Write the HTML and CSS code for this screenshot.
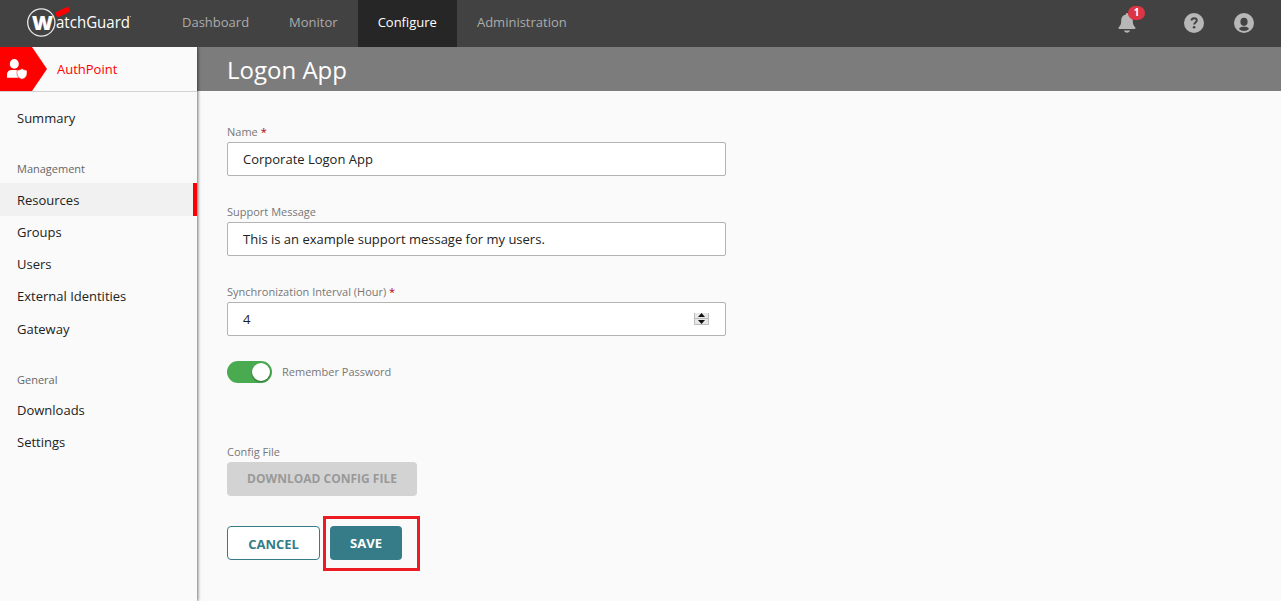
FILE: index.html
```html
<!DOCTYPE html>
<html lang="en">
<head>
<meta charset="utf-8">
<title>Logon App</title>
<link rel="stylesheet" href="styles.css">
</head>
<body>
<header class="topbar">
  <div class="brand">
    <svg class="logo" width="110" height="34" viewBox="0 0 110 34">
      <circle cx="16.300" cy="17.500" r="13.600" fill="none" stroke="#e8e8e8" stroke-width="1.300"/>
      <path d="M33.500 9 42 5" stroke="#f00" stroke-width="5.600" stroke-linecap="round"/>
      <text class="logo-w" x="7" y="25" textLength="21" lengthAdjust="spacingAndGlyphs">W</text>
      <text class="logo-word" x="31" y="23" textLength="74" lengthAdjust="spacingAndGlyphs">atchGuard</text>
      <circle cx="105.500" cy="11.500" r=".6" fill="#bbb"/>
    </svg>
  </div>
  <nav class="tabs">
    <a class="tab">Dashboard</a>
    <a class="tab">Monitor</a>
    <a class="tab active">Configure</a>
    <a class="tab">Administration</a>
  </nav>
  <div class="tools">
    <div class="bell">
      <svg width="18" height="20" viewBox="0 0 18 20" fill="#b7b7b7">
        <path d="M9 0C8.200 0 7.900.6 7.900 1.400 4.800 2 3.200 4.200 3.200 7.500c0 4-1 5.300-2.400 6.700-.6.7-.2 1.800.7 1.800h15c.9 0 1.300-1.100.7-1.800-1.400-1.400-2.400-2.700-2.400-6.700 0-3.300-1.600-5.500-4.700-6.100C10.100.6 9.800 0 9 0zM6 17.500h6c-.3 1.400-1.500 2.200-3 2.200s-2.700-.8-3-2.200z"/>
      </svg>
      <span class="badge">1</span>
    </div>
    <svg class="help" width="20" height="20" viewBox="0 0 20 20">
      <circle cx="10" cy="10" r="10" fill="#b7b7b7"/>
      <path d="M7.300 7.500C7.700 6 8.700 5.200 10.100 5.200c1.600 0 2.700.9 2.700 2.200 0 2-2.700 2-2.700 4.100" fill="none" stroke="#424242" stroke-width="1.900"/>
      <circle cx="10.100" cy="14.300" r="1.300" fill="#424242"/>
    </svg>
    <svg class="user" width="20" height="20" viewBox="0 0 20 20">
      <circle cx="10" cy="10" r="10" fill="#b7b7b7"/>
      <ellipse cx="10" cy="8.800" rx="3.600" ry="4.100" fill="#424242"/>
      <path d="M5 15.900c.4-1.500 2.500-2.100 5-2.100s4.600.6 5 2.100c-1.200 1.300-3 2-5 2s-3.800-.7-5-2z" fill="#424242"/>
    </svg>
  </div>
</header>
<div class="shell">
  <aside class="sidebar">
    <div class="product">
      <svg width="47" height="44" viewBox="0 0 47 44">
        <path d="M0 0H32L47 22 32 44H0z" fill="#f00"/>
        <ellipse cx="14.300" cy="16.900" rx="4.500" ry="4.900" fill="#fff"/>
        <path d="M7 30.700v-3.200c0-3 2-4.500 4.500-4.500h5c.8 0 1 .2 1 .7v3.300c0 1.500.4 2.700 1.200 3.700z" fill="#fff"/>
        <path d="M22 21.600c1.700 1.200 3 1.600 5 1.700v3.400c0 2.700-1.900 4.600-5 5.600-3.100-1-5-2.900-5-5.600v-3.400c2-.1 3.300-.5 5-1.700z" fill="#fff" stroke="#f00" stroke-width=".5"/>
      </svg>
      <span>AuthPoint</span>
    </div>
    <nav class="menu">
      <a class="item">Summary</a>
      <h2 class="group">Management</h2>
      <a class="item current">Resources</a>
      <a class="item">Groups</a>
      <a class="item">Users</a>
      <a class="item">External Identities</a>
      <a class="item">Gateway</a>
      <h2 class="group">General</h2>
      <a class="item">Downloads</a>
      <a class="item">Settings</a>
    </nav>
  </aside>
  <main class="main">
    <h1 class="title">Logon App</h1>
    <form class="form">
      <div class="field">
        <div class="label">Name <span class="req">*</span></div>
        <div class="input">Corporate Logon App</div>
      </div>
      <div class="field">
        <div class="label">Support Message</div>
        <div class="input">This is an example support message for my users.</div>
      </div>
      <div class="field">
        <div class="label">Synchronization Interval (Hour) <span class="req">*</span></div>
        <div class="input">4
          <svg class="spinner" width="15" height="12" viewBox="0 0 15 12">
            <path d="M0 0H15V12H0z" fill="#e8e8e8"/>
            <path d="M.5 0V11.500H14.500V0M0 5.500H15" fill="none" stroke="#bcbcbc"/>
            <path d="M4 4 7.500 0 11 4zM4 7h7l-3.500 4z" fill="#111"/>
          </svg>
        </div>
      </div>
      <div class="remember"><span class="switch"><span class="knob"></span></span>Remember Password</div>
      <div class="label">Config File</div>
      <div class="btn download">DOWNLOAD CONFIG FILE</div>
      <div class="actions">
        <div class="btn cancel">CANCEL</div>
        <div class="highlight"><div class="btn save">SAVE</div></div>
      </div>
    </form>
  </main>
</div>
</body>
</html>
```
FILE: styles.css
```css
* { box-sizing: border-box; }
body { margin: 0; height: 601px; overflow: hidden; background: #fafafa; color: #222; font: 13px/20px "Open Sans", sans-serif; }
svg { display: block; flex: none; }
.topbar { display: flex; height: 47px; background: #424242; }
.brand { width: 162px; padding: 5px 0 0 25px; }
.logo { overflow: visible; }
.logo-w { fill: #fff; stroke: #fff; stroke-width: .2px; font: 800 20px "Open Sans", sans-serif; }
.logo-word { fill: #fff; font: 16.500px "Open Sans", sans-serif; }
.tabs { display: flex; }
.tab { padding: 12px 20px 0; color: #acacac; white-space: nowrap; }
.tab.active { background: #262626; color: #fff; }
.tools { display: flex; margin-left: auto; padding: 13px 27px 0 0; }
.bell { position: relative; width: 18px; margin-right: 48px; }
.badge { position: absolute; left: 10px; top: -7px; width: 17px; height: 14px; border-radius: 7px; background: #dc3545; color: #fff; font-size: 10px; font-weight: 700; line-height: 13px; text-align: center; }
.help { margin-right: 30px; }
.shell { display: flex; height: 554px; }
.sidebar { position: relative; width: 197px; background: #fafafa; box-shadow: 1px 0 3px rgba(0, 0, 0, .55); clip-path: inset(0 -6px 0 0); }
.product { display: flex; gap: 10px; height: 45px; border-bottom: 1px solid #d2d2d2; color: #f00; line-height: 44px; }
.menu { padding-top: 10px; }
.item { display: block; height: 32.200px; padding-left: 17px; line-height: 33px; }
.item.current { height: 33px; border-right: 4px solid #f00; background: #f1f1f1; line-height: 34px; }
.group { height: 29px; margin: 0; padding: 5px 0 0 17px; color: #666; font-size: 11px; font-weight: 400; line-height: 20px; }
.item + .group { margin-top: 19.800px; }
.main { flex: 1; }
.title { height: 44px; margin: 0; padding-left: 30px; background: #7c7c7c; color: #fff; font-size: 24px; font-weight: 400; line-height: 46px; }
.form { padding: 31px 0 0 30px; }
.field { width: 499px; height: 80px; }
.label { height: 20px; color: #777; font-size: 11px; line-height: 20px; }
.req { color: #b00010; }
.input { display: flex; align-items: center; justify-content: space-between; height: 34px; padding: 0 16px 0 15px; border: 1px solid #b3b3b3; border-radius: 2px; background: #fff; }
.remember { display: flex; align-items: center; gap: 10px; height: 20px; margin-bottom: 60px; color: #777; font-size: 11px; }
.switch { display: flex; justify-content: flex-end; width: 45px; height: 22px; padding: 2px; border-radius: 11px; background: #49aa50; }
.knob { width: 18px; height: 18px; border-radius: 50%; background: #fff; box-shadow: 0 1px 2px rgba(0, 0, 0, .4); }
.btn { height: 34px; border-radius: 4px; font-weight: 700; line-height: 34px; text-align: center; }
.download { width: 190px; background: #d3d3d3; color: #999; font-size: 12px; }
.actions { display: flex; gap: 3px; margin-top: 20px; }
.cancel { width: 93px; margin-top: 10px; border: 1px solid #367c88; background: #fff; color: #367c88; }
.highlight { width: 97px; height: 55px; padding: 7px 0 0 4px; border: 3px solid #ec1c24; }
.save { width: 72px; background: #367c88; color: #fff; }
```
